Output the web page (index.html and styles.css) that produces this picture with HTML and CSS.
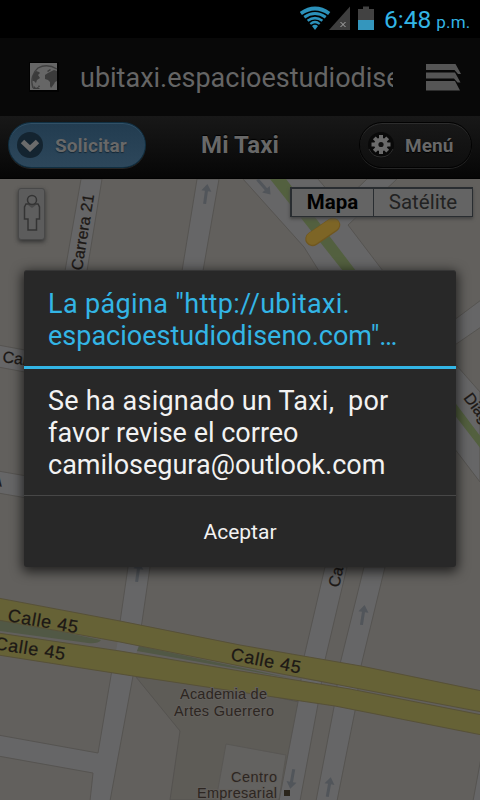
FILE: index.html
```
<!DOCTYPE html>
<html lang="es">
<head>
<meta charset="utf-8">
<title>Mi Taxi</title>
<link rel="stylesheet" href="styles.css">
</head>
<body>
<div class="phone">
  <div class="status">
    <svg class="signals" width="76" height="38" viewBox="300 0 76 38">
      <g fill="none" stroke="#2b91ba">
        <path d="M300.800 13.500Q315 3.500 329.200 13.500" stroke-width="3.800"/>
        <path d="M304.300 17.200Q315 9.800 325.700 17.200" stroke-width="3"/>
        <path d="M307.600 20.800Q315 15.300 322.400 20.800" stroke-width="2.600"/>
        <path d="M310.300 24Q315 20 319.700 24" stroke-width="2.200"/>
      </g>
      <path d="M312 26Q315 23.500 318 26L315 30Z" fill="#2b91ba"/>
      <path d="M329 30L350 6.500V30Z" fill="#3e3e3e"/>
      <path d="M340.500 22L345.500 27M345.500 22L340.500 27" stroke="#aaa" stroke-width="1"/>
      <path d="M358 9H363V6.500H369V9H374V20H358Z" fill="#424242"/>
      <path d="M358 20H374V30H358Z" fill="#3496bd"/>
    </svg>
    <span class="time">6:48</span><span class="ampm">p.m.</span>
  </div>
  <div class="urlbar">
    <svg class="globe" width="30" height="30" viewBox="0 0 30 30">
      <path fill="#020202" d="M0 0H30V30H0Z"/><path fill="#666" d="M1 1H28V28H1Z"/>
      <path d="M4 26C1 18 4 10 9 6Q18 1 28 7" fill="none" stroke="#404040" stroke-width="1.300"/>
      <path fill="#3b3b3b" d="M4 13L7 9L10 10L11 11L9 13L11 16L8 18L7 21L5 19L3.500 19ZM16 13L19 11L21 10L25 8L28 9V19L26 20L25 22L22 26L21 24L21 20L19 18L16 17ZM18 9L21 7L22 8L19 10ZM5 24L7 26L9 25L11 27L4 27ZM10 23L11 25L9 25Z"/>
    </svg>
    <span class="url">ubitaxi.espacioestudiodiseno.com</span>
    <svg class="tabs" width="36" height="28" viewBox="0 0 36 28">
      <path fill="#555" d="M0 1H29.500L35 11H32L28.500 7H0ZM0 9.500H29L34.500 19.500H31.500L28 15.500H0ZM0 18H29L34 27.500H0Z"/>
    </svg>
  </div>
  <header class="header">
    <div class="btn blue">
      <svg width="26" height="28" viewBox="0 0 26 28"><circle cx="13" cy="14" r="13" fill="#142430"/><path d="M5.500 10.500L13 17.500L20.500 10.500" fill="none" stroke="#6b6b6b" stroke-width="5"/></svg>
      <span>Solicitar</span>
    </div>
    <h1>Mi Taxi</h1>
    <div class="btn dark">
      <svg width="26" height="28" viewBox="0 0 26 28"><circle cx="13" cy="14" r="13" fill="#090909"/><path d="M1 18A13 13 0 0 0 25 18" fill="none" stroke="#303030"/>
      <g stroke="#6b6b6b" stroke-width="4"><path d="M13 4V23M3.500 13.500H22.500M6.300 6.800L19.700 20.200M19.700 6.800L6.300 20.200"/></g><circle cx="13" cy="13.500" r="6.800" fill="#6b6b6b"/><circle cx="13" cy="13.500" r="2.600" fill="#111"/></svg>
      <span>Menú</span>
    </div>
  </header>
  <main class="map">
    <svg class="streets" width="480" height="621" viewBox="0 179 480 621">
      <defs>
        <path id="arrow" d="M-1.500 10V-3H-5L0 -10L5 -3H1.500V10Z" fill="#51555a"/>
      </defs>
      <path fill="#62605d" d="M0 179H480V800H0Z"/>
      <path fill="#5e5c57" d="M136 677L180 731L170 800H290L299 702L220 685Z" stroke="#555350"/>
      <path fill="#636260" d="M226 744L286 755L279 800H216Z" stroke="#595754"/>
      <g fill="#666667" stroke="#565451">
        <path d="M81 179H102L87 271L60 450H38L65 271Z"/>
        <path d="M-2 345L100 364V386L-2 367Z"/>
        <path d="M-2 471L130 494V516L-2 493Z"/>
        <path d="M243 179L304 247L319 271L480 482V392L457 366L383 271L348 225L397 179H367L340 205L318 179Z"/>
        <path d="M430 338L481 300V327L430 362Z"/>
        <path d="M325 567H347L325 660L318 704L300 801H279L298 702L304 657Z"/>
        <path d="M364 567H385L361 666L355 711L337 801H316L334 707L340 664Z"/>
        <path d="M197 179H219L203 271L150 567L142 622L133 676L110 801H90L93 773L-2 756V735L98 753L120 622L128 567L182 271Z"/>
        <path d="M481 758L473 801H481Z"/>
      </g>
      <path fill="#53603f" d="M270 179H286L356 271L481 437V449L457 418L343 271Z"/>
      <path d="M312.500 239L333 225" stroke="#705720" stroke-width="14.500" stroke-linecap="round"/>
      <path d="M312.500 238.500L333 224.500" stroke="#7d6526" stroke-width="12.500" stroke-linecap="round"/>
      <path fill="#62605d" d="M0 618L350 686L0 634Z"/>
      <path fill="#666667" d="M118 640L139 644L136 655L116 651Z"/>
      <path fill="#515845" d="M0 619L101 640Q98 644 88 643L0 631ZM139 646L290 678L137 651Z"/>
      <g fill="#666236" stroke="#575138">
        <path d="M-2 598L120 621L240 645L303 656L361 666L482 691V712L350 687L240 666L120 642L-2 620Z"/>
        <path d="M-2 633L120 651L240 671L350 689L482 715V735L335 706L240 692L133 676L-2 655Z"/>
      </g>
      <use href="#arrow" transform="translate(206 194) rotate(8)"/>
      <use href="#arrow" transform="translate(264 187) rotate(139)"/>
      <use href="#arrow" transform="translate(363 615) rotate(9)"/>
      <use href="#arrow" transform="translate(292 779) rotate(190)"/>
      <use href="#arrow" transform="translate(329 787) rotate(10)"/>
      <use href="#arrow" transform="translate(138 572) rotate(8)"/>
      <path d="M284 790H290V796H284Z" fill="#2b251b"/>
      <g class="road-names">
        <text transform="translate(82 271) rotate(-81)" textLength="77">Carrera 21</text>
        <text transform="translate(2 362) rotate(8)">Calle</text>
        <text transform="translate(-9 485) rotate(8)">A</text>
        <text transform="translate(463 398) rotate(53)">Diagonal</text>
        <text transform="translate(339 588) rotate(-78)">Carrera</text>
        <g class="avenue">
          <text transform="translate(7 621) rotate(10)" textLength="71">Calle 45</text>
          <text transform="translate(-6 649) rotate(9)" textLength="71">Calle 45</text>
          <text transform="translate(230 660) rotate(11)" textLength="71">Calle 45</text>
        </g>
      </g>
      <g class="places">
        <text x="180" y="699" textLength="87">Academia de</text>
        <text x="174" y="716" textLength="100">Artes Guerrero</text>
        <text x="231" y="782" textLength="46">Centro</text>
        <text x="197" y="798" textLength="80">Empresarial</text>
      </g>
    </svg>
    <div class="pegman">
      <svg width="18" height="38" viewBox="0 0 18 38"><g fill="#5e5e5e" stroke="#343434" stroke-width="1.500"><path d="M3 10H15L16.500 13V25H13.500V36H5V25H1.500V13Z"/><circle cx="9" cy="6" r="4.500"/></g><path d="M5 11L9 14L13 11" fill="#484848"/></svg>
    </div>
    <div class="maptype"><b>Mapa</b><span>Satélite</span></div>
  </main>
  <section class="dialog">
    <h2><span class="wide">La página "http://ubitaxi.</span><br>espacioestudiodiseno.com"…</h2>
    <p><span class="spaced">Se ha asignado un Taxi,&nbsp; por</span><br>favor revise el correo<br>camilosegura@outlook.com</p>
    <div class="accept">Aceptar</div>
  </section>
</div>
</body>
</html>
```
FILE: styles.css
```
* { box-sizing: border-box; }
body { margin: 0; background: #000; font-family: Roboto, sans-serif; }
.phone { position: relative; width: 480px; height: 800px; overflow: hidden; display: flex; flex-direction: column; }
.status { height: 38px; display: flex; align-items: baseline; padding-left: 300px; color: #33b5e5; }
.signals { align-self: flex-start; flex: none; }
.time { font-size: 24.500px; line-height: 40px; margin-left: 8px; }
.ampm { font-size: 17px; margin-left: 5px; letter-spacing: .2px; }
.urlbar { height: 78px; background: #080808; display: flex; align-items: center; padding: 0 18px 0 29px; }
.globe { flex: none; }
.url { width: 314px; margin-left: 21px; overflow: hidden; white-space: nowrap; color: #656565; font-size: 27px; line-height: 40px; padding-top: 2px; }
.tabs { margin-left: 33px; flex: none; }
.header { height: 63px; display: flex; justify-content: space-between; align-items: center; padding: 0 8px 4px; position: relative; background: linear-gradient(#181818, #060606); border-bottom: 1px solid #020202; }
.header h1 { position: absolute; inset: 0; margin: 0; text-align: center; line-height: 58px; font-size: 24px; letter-spacing: .1px; font-weight: 700; color: #686868; text-shadow: 0 -1px 1px #000; }
.btn { position: relative; z-index: 1; display: flex; align-items: center; height: 46px; border-radius: 23px; padding-left: 8px; font-size: 19px; font-weight: 700; letter-spacing: .1px; color: #686868; text-shadow: 0 1px 1px #000; }
.btn span { margin-left: 12px; }
.blue { width: 138px; border: 1px solid #102f42; background: linear-gradient(#223c50, #2d475b); box-shadow: inset 0 1px #315066, 0 1px #252525; text-shadow: 0 1px 1px #152735; }
.dark { width: 113px; border: 1px solid #020202; background: linear-gradient(#181818, #0e0e0e); box-shadow: inset 0 1px #2d2d2d, 0 1px #252525; }
.dark span { margin-left: 11px; }
.map { position: relative; height: 621px; }
.streets { display: block; }
.streets text { font-family: "Liberation Sans", Arial, sans-serif; fill: #1c1815; }
.road-names { font-size: 16px; stroke: #1c1815; stroke-width: .25px; }
.avenue { font-size: 18px; }
.places { font-size: 14.500px; stroke: #625f5b; stroke-width: 2px; paint-order: stroke; }
.places text { fill: #2d2622; }
.pegman { position: absolute; left: 18px; top: 9px; width: 27px; height: 52px; padding: 5px 4px; border: 1px solid #484848; border-radius: 3px; background: #5c5c5c; box-shadow: 0 2px 4px #333; }
.maptype { position: absolute; left: 290px; top: 8px; width: 183px; height: 30px; display: grid; grid-template-columns: 82px 1fr; border: 2px solid #292d31; border-right-width: 1px; border-bottom-width: 1px; background: #646464; color: #222; font-size: 20.500px; line-height: 27px; text-align: center; box-shadow: 0 2px 3px #444; }
.maptype b { color: #000; border-right: 1px solid #292d31; }
.dialog { position: absolute; left: 24px; top: 270px; width: 432px; height: 297px; border-radius: 3px; background: #282828; border-top: 1px solid #363636; box-shadow: 0 3px 12px 2px rgba(0,0,0,.65); }
.dialog h2 { margin: 0; height: 98px; padding: 17px 24px 0; border-bottom: 3px solid #33b5e5; color: #33b5e5; font-size: 27px; line-height: 32px; font-weight: 400; white-space: nowrap; }
.wide { letter-spacing: .34px; }
.spaced { letter-spacing: .22px; }
.dialog p { margin: 0; height: 127px; padding: 16px 24px 0; border-bottom: 1px solid #474747; color: #f2f2f2; font-size: 27px; line-height: 32px; white-space: nowrap; }
.accept { text-align: center; line-height: 72px; font-size: 21px; color: #f2f2f2; }
```
